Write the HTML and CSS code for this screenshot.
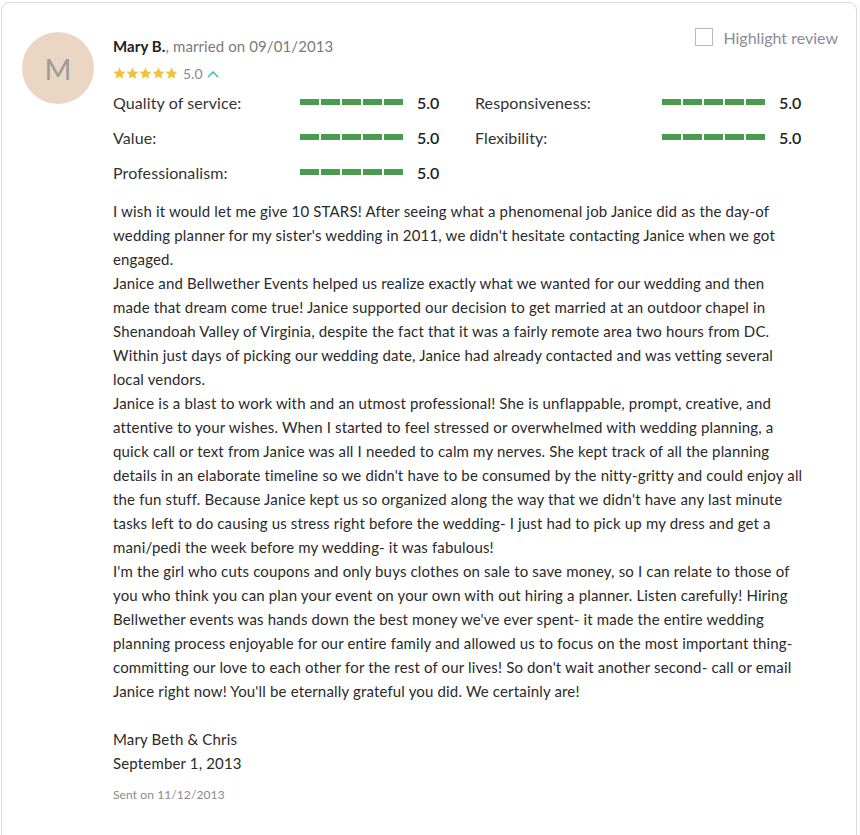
FILE: index.html
```html
<!DOCTYPE html>
<html>
<head>
<meta charset="utf-8">
<link rel="stylesheet" href="styles.css">
</head>
<body>
<div class="card">
  <div class="avatar">M</div>
  <div class="main">
    <div class="head">
      <div class="who">
        <div class="name"><b>Mary B.</b>, married on 09/01/2013</div>
        <div class="overall">
          <span class="stars">
            <svg width="66" height="13" viewBox="0 0 66 13">
              <g fill="#f0c23c">
                <path id="s" d="M6.5 0.5l1.76 3.9 4.24.4-3.2 2.85.93 4.15L6.5 9.6 2.77 11.8l.93-4.15L.5 4.8l4.24-.4z"/>
                <use href="#s" x="13"/>
                <use href="#s" x="26"/>
                <use href="#s" x="39"/>
                <use href="#s" x="52"/>
              </g>
            </svg>
          </span>
          <span class="score">5.0</span>
          <svg class="chev" width="12" height="8" viewBox="0 0 12 8"><path d="M1 7l5-5 5 5" fill="none" stroke="#2bb5b5" stroke-width="1.3"/></svg>
        </div>
      </div>
      <label class="highlight"><span class="box"></span>Highlight review</label>
    </div>
    <div class="ratings">
      <div class="rate"><span class="lbl">Quality of service:</span><span class="bar"><i></i><i></i><i></i><i></i><i></i></span><span class="val">5.0</span></div>
      <div class="rate"><span class="lbl">Responsiveness:</span><span class="bar"><i></i><i></i><i></i><i></i><i></i></span><span class="val">5.0</span></div>
      <div class="rate"><span class="lbl">Value:</span><span class="bar"><i></i><i></i><i></i><i></i><i></i></span><span class="val">5.0</span></div>
      <div class="rate"><span class="lbl">Flexibility:</span><span class="bar"><i></i><i></i><i></i><i></i><i></i></span><span class="val">5.0</span></div>
      <div class="rate"><span class="lbl">Professionalism:</span><span class="bar"><i></i><i></i><i></i><i></i><i></i></span><span class="val">5.0</span></div>
    </div>
    <p class="text">I wish it would let me give 10 STARS! After seeing what a phenomenal job Janice did as the day-of<br>wedding planner for my sister's wedding in 2011, we didn't hesitate contacting Janice when we got<br>engaged.<br>Janice and Bellwether Events helped us realize exactly what we wanted for our wedding and then<br>made that dream come true! Janice supported our decision to get married at an outdoor chapel in<br>Shenandoah Valley of Virginia, despite the fact that it was a fairly remote area two hours from DC.<br>Within just days of picking our wedding date, Janice had already contacted and was vetting several<br>local vendors.<br>Janice is a blast to work with and an utmost professional! She is unflappable, prompt, creative, and<br>attentive to your wishes. When I started to feel stressed or overwhelmed with wedding planning, a<br>quick call or text from Janice was all I needed to calm my nerves. She kept track of all the planning<br>details in an elaborate timeline so we didn't have to be consumed by the nitty-gritty and could enjoy all<br>the fun stuff. Because Janice kept us so organized along the way that we didn't have any last minute<br>tasks left to do causing us stress right before the wedding- I just had to pick up my dress and get a<br>mani/pedi the week before my wedding- it was fabulous!<br>I'm the girl who cuts coupons and only buys clothes on sale to save money, so I can relate to those of<br>you who think you can plan your event on your own with out hiring a planner. Listen carefully! Hiring<br>Bellwether events was hands down the best money we've ever spent- it made the entire wedding<br>planning process enjoyable for our entire family and allowed us to focus on the most important thing-<br>committing our love to each other for the rest of our lives! So don't wait another second- call or email<br>Janice right now! You'll be eternally grateful you did. We certainly are!<br><br>Mary Beth &amp; Chris<br>September 1, 2013</p>
    <div class="sent">Sent on 11/12/2013</div>
  </div>
</div>
</body>
</html>
```

FILE: styles.css
```css
html, body {
  margin: 0;
  background: #fff;
}
body {
  padding: 2px 0 0 1px;
  font-family: Lato, "Noto Sans", sans-serif;
  color: #333;
}
.card {
  width: 856px;
  box-sizing: border-box;
  height: 860px;
  border: 1px solid #dcdcdc;
  border-radius: 8px;
  display: flex;
  padding: 29px 0 0 20px;
}
.avatar {
  flex: none;
  width: 72px;
  height: 72px;
  border-radius: 50%;
  background: #ebd6c3;
  color: #9a9a9a;
  font-size: 29px;
  display: flex;
  align-items: center;
  justify-content: center;
}
.main {
  margin-left: 19px;
  flex: 1;
  padding-right: 18px;
}
.head {
  display: flex;
  justify-content: space-between;
}
.name {
  font-size: 15px;
  line-height: 18px;
  margin-top: 5px;
  color: #7a7a7a;
  letter-spacing: 0.1px;
}
.name b {
  color: #222;
  font-weight: 700;
}
.overall {
  display: flex;
  align-items: center;
  margin-top: 11px;
  height: 15px;
}
.stars svg { display: block; }
.score {
  font-size: 14px;
  color: #8a8a8a;
  margin-left: 4px;
}
.chev { margin-left: 4px; }
.highlight {
  display: flex;
  align-items: center;
  font-size: 16px;
  color: #8a8b99;
  height: 18px;
  margin-top: -4px;
}
.box {
  width: 16px;
  height: 16px;
  border: 1px solid #bbb;
  margin-right: 10px;
}
.ratings {
  display: grid;
  grid-template-columns: 362px 362px;
  row-gap: 17px;
  margin-top: 12px;
}
.rate {
  display: flex;
  align-items: center;
  height: 18px;
  font-size: 16px;
}
.lbl {
  width: 187px;
  letter-spacing: 0.1px;
}
.bar {
  display: flex;
  gap: 2px;
  width: 117px;
}
.bar i {
  width: 19px;
  height: 6px;
  background: #4a9a50;
}
.val {
  font-weight: 600;
  color: #222;
}
.text {
  margin: 18px 0 0;
  font-size: 15px;
  line-height: 24px;
  color: #2a2a2a;
  white-space: nowrap;
  letter-spacing: 0.16px;
}
.sent {
  margin-top: 12px;
  font-size: 12px;
  color: #8a8a8a;
  letter-spacing: 0.1px;
}
```
